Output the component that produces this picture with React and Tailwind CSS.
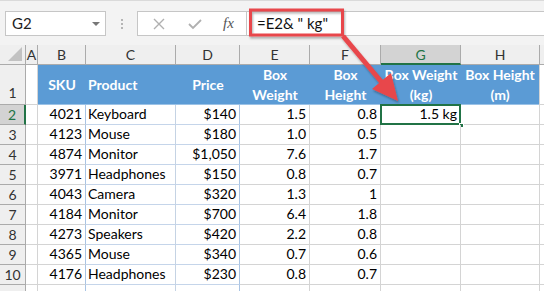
import React from "react";

const cols = [
  { key: "hdr", w: "w-[26px]" },
  { key: "A", w: "w-[12px]" },
  { key: "B", w: "w-[48px]" },
  { key: "C", w: "w-[90px]" },
  { key: "D", w: "w-[64px]" },
  { key: "E", w: "w-[70px]" },
  { key: "F", w: "w-[71px]" },
  { key: "G", w: "w-[80px]" },
  { key: "H", w: "w-[79px]" },
];

const rows = [
  [2, "4021", "Keyboard", "$140", "1.5", "0.8", "1.5 kg"],
  [3, "4123", "Mouse", "$180", "1.0", "0.5", ""],
  [4, "4874", "Monitor", "$1,050", "7.6", "1.7", ""],
  [5, "3971", "Headphones", "$150", "0.8", "0.7", ""],
  [6, "4043", "Camera", "$320", "1.3", "1", ""],
  [7, "4184", "Monitor", "$700", "6.4", "1.8", ""],
  [8, "4273", "Speakers", "$420", "2.2", "0.8", ""],
  [9, "4365", "Mouse", "$340", "0.7", "0.6", ""],
  [10, "4176", "Headphones", "$230", "0.8", "0.7", ""],
];

const font = { fontFamily: "Lato, 'Open Sans', sans-serif" };

const FormulaBar = () => (
  <div className="relative h-[45px] bg-[#f3f3f3] pt-[10px] border-t border-[#dadada]">
    <div className="flex h-[25px]">
      <div className="ml-[5px] w-[101px] bg-white border border-[#c6c6c6] flex items-center justify-between pl-[6px] pr-[5px] text-[15px] text-[#222]">
        <span>G2</span>
        <span className="w-0 h-0 border-l-[4px] border-r-[4px] border-t-[4px] border-l-transparent border-r-transparent border-t-[#777]" />
      </div>
      <div className="w-[31px] flex flex-col items-center justify-center gap-[2px]">
        <span className="w-[2px] h-[2px] bg-[#b5b5b5]" />
        <span className="w-[2px] h-[2px] bg-[#b5b5b5]" />
        <span className="w-[2px] h-[2px] bg-[#b5b5b5]" />
      </div>
      <div className="w-[110px] bg-white border border-[#c6c6c6] flex items-center">
        <svg width="12" height="12" viewBox="0 0 12 12" className="ml-[15px]">
          <path d="M1 1 L11 11 M11 1 L1 11" stroke="#b0b0b0" strokeWidth="1.4" />
        </svg>
        <svg width="14" height="12" viewBox="0 0 14 12" className="ml-[23px]">
          <path d="M1 6 L5 10 L13 2" stroke="#b0b0b0" strokeWidth="1.8" fill="none" />
        </svg>
        <span
          className="ml-[21px] italic text-[15px] text-[#555]"
          style={{ fontFamily: "'Liberation Serif', serif" }}
        >
          fx
        </span>
      </div>
      <div className="flex-1 bg-white border-y border-[#c6c6c6] flex items-center pl-[10px] text-[15px] text-[#111]">
        =E2&amp; " kg"
      </div>
    </div>
  </div>
);

const ColHeader = () => (
  <div className="flex h-[20px] bg-[#efefef] text-[14px] text-[#333]">
    <div className="w-[26px] relative border-r border-b border-[#ababab]">
      <svg width="14" height="14" className="absolute right-[3px] bottom-[3px]">
        <polygon points="14,0 14,14 0,14" fill="#c2c2c2" />
      </svg>
    </div>
    {cols.slice(1).map((c) =>
      c.key === "G" ? (
        <div
          key={c.key}
          className={`${c.w} flex items-center justify-center bg-[#d3d3d3] text-[#217346] border-r border-[#ababab] border-b-2 border-b-[#217346]`}
        >
          {c.key}
        </div>
      ) : (
        <div
          key={c.key}
          className={`${c.w} flex items-center justify-center border-r border-b border-[#ababab]`}
        >
          {c.key}
        </div>
      )
    )}
    <div className="flex-1 border-b border-[#ababab]" />
  </div>
);

const RowHead = ({ n, sel, tall }) => (
  <div
    className={`w-[26px] shrink-0 flex justify-center text-[14px] ${tall ? "items-end pb-[1px]" : "items-center"} ${
      sel
        ? "bg-[#d3d3d3] text-[#217346] border-r-2 border-r-[#217346] border-b border-b-[#ababab]"
        : "bg-[#efefef] text-[#333] border-r border-b border-[#ababab]"
    }`}
  >
    {n}
  </div>
);

const HeaderRow = () => (
  <div className="flex h-[40px]">
    <RowHead n={1} tall />
    <div className="w-[12px] border-r border-b border-[#d4d4d4] bg-white" />
    <div className="flex bg-[#5b9bd5] text-white font-bold text-[14px] leading-[20px] border-b border-[#9bc2e6]">
      <div className="w-[48px] flex items-center justify-center">SKU</div>
      <div className="w-[90px] flex items-center pl-[2px]">Product</div>
      <div className="w-[64px] flex items-center justify-center">Price</div>
      <div className="w-[70px] flex items-center justify-center text-center">Box<br />Weight</div>
      <div className="w-[71px] flex items-center justify-center text-center">Box<br />Height</div>
      <div className="w-[80px] flex items-center justify-center text-center whitespace-nowrap">Box Weight<br />(kg)</div>
      <div className="w-[78px] flex items-center justify-center text-center whitespace-nowrap">Box Height<br />(m)</div>
    </div>
    <div className="w-[1px] bg-[#d4d4d4]" />
    <div className="flex-1 border-b border-[#d4d4d4] bg-white" />
  </div>
);

const Cell = ({ w, children, right, cls = "border-r border-b border-[#d4d4d4]" }) => (
  <div
    className={`${w} h-full shrink-0 flex items-end pb-[1px] leading-[18px] whitespace-nowrap overflow-hidden ${
      right ? "justify-end pr-[3px]" : "pl-[2px]"
    } ${cls}`}
  >
    {children}
  </div>
);

const DataRow = ({ r }) => {
  const [n, sku, prod, price, bw, bh, g] = r;
  const sel = n === 2;
  return (
    <div className="flex h-[20px] text-[14px] text-black">
      <RowHead n={n} sel={sel} />
      <Cell w="w-[12px]" />
      <Cell w="w-[48px]" right cls="border-r border-r-[#a9c4e4] border-b border-b-[#d4d4d4]">
        {sku}
      </Cell>
      <Cell w="w-[90px]" cls="border-r border-r-[#c5d3e4] border-b border-b-[#c5d5ea]">
        {prod}
      </Cell>
      <Cell w="w-[64px]" right cls="border-r border-r-[#a9c4e4] border-b border-b-[#c5d5ea]">
        {price}
      </Cell>
      <Cell w="w-[70px]" right>
        {bw}
      </Cell>
      <Cell w="w-[71px]" right>
        {bh}
      </Cell>
      <div className="relative w-[80px] shrink-0 h-full">
        <Cell w="w-[80px]" right>
          {g}
        </Cell>
        {sel && (
          <>
            <div className="absolute left-[-1px] top-[-1px] right-0 bottom-0 border-2 border-[#217346]" />
            <div className="absolute right-[-3px] bottom-[-3px] w-[5px] h-[5px] bg-[#217346] border border-white" />
          </>
        )}
      </div>
      <Cell w="w-[79px]" />
      <div className="flex-1 border-b border-[#d4d4d4]" />
    </div>
  );
};

const Arrow = () => (
  <svg className="absolute left-0 top-0 pointer-events-none" width="544" height="291">
    <defs>
      <filter id="sh" x="-20%" y="-20%" width="140%" height="140%">
        <feDropShadow dx="1" dy="2" stdDeviation="1.2" floodColor="#000" floodOpacity="0.3" />
      </filter>
    </defs>
    <g filter="url(#sh)">
      <rect x="250.5" y="10" width="92" height="25" fill="none" stroke="#e8474b" strokeWidth="3" />
      <line x1="343" y1="36" x2="384" y2="85" stroke="#e8474b" strokeWidth="5" />
      <polygon points="398,101 372,89 391,73" fill="#e8474b" />
    </g>
  </svg>
);

export default function App() {
  return (
    <div className="relative w-[544px] h-[291px] overflow-hidden bg-white" style={font}>
      <FormulaBar />
      <ColHeader />
      <HeaderRow />
      {rows.map((r) => (
        <DataRow key={r[0]} r={r} />
      ))}
      <DataRow r={["", "", "", "", "", "", ""]} />
      <Arrow />
    </div>
  );
}
